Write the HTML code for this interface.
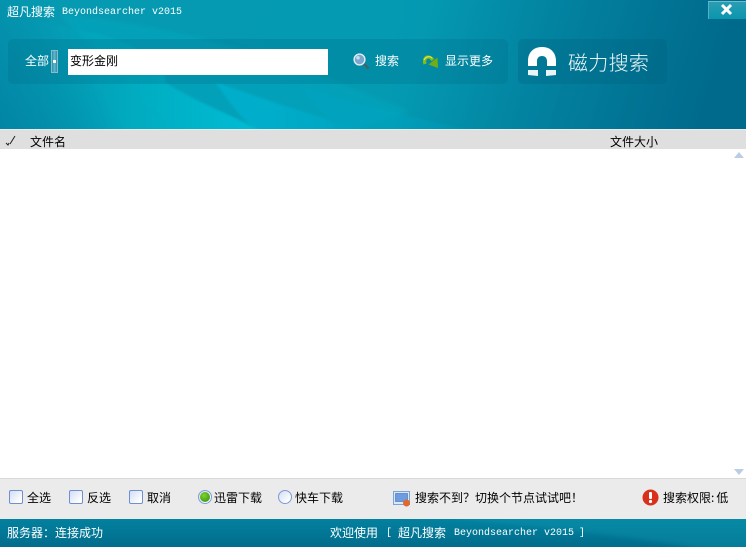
<!DOCTYPE html>
<html><head><meta charset="utf-8"><style>
html,body{margin:0;padding:0;width:746px;height:547px;overflow:hidden;background:#fff}
body{position:relative;font-family:"WenQuanYi Zen Hei","Noto Sans CJK SC",sans-serif;font-size:12px;color:#000}
.t{position:absolute;white-space:nowrap;line-height:14px;height:14px}
.w{color:#fff}
.m{font-family:"Liberation Mono",monospace;font-size:10px}
.abs{position:absolute}
.cb{position:absolute;width:12px;height:12px;border:1px solid #6f90cf;border-radius:2px;background:linear-gradient(135deg,#d3ddf5,#fff 85%)}
.rb{position:absolute;width:12px;height:12px;border:1px solid #7d9bd6;border-radius:50%;background:linear-gradient(135deg,#d3ddf5,#fff 85%)}
</style></head><body>
<svg class="abs" style="left:0;top:0" width="746" height="129" viewBox="0 0 746 129">
<defs>
<linearGradient id="g" x1="0" y1="0" x2="746" y2="129" gradientUnits="userSpaceOnUse"><stop offset="0" stop-color="#069ab2"/><stop offset=".5" stop-color="#049ab2"/><stop offset="1" stop-color="#048fab"/></linearGradient>
<linearGradient id="br" x1="0" y1="0" x2="240" y2="0" gradientUnits="userSpaceOnUse"><stop offset="0" stop-color="#009ab6" stop-opacity="0"/><stop offset=".55" stop-color="#01aec2" stop-opacity=".85"/><stop offset="1" stop-color="#00bad2"/></linearGradient>
<linearGradient id="rr" x1="260" y1="0" x2="480" y2="0" gradientUnits="userSpaceOnUse"><stop offset="0" stop-color="#00aecb"/><stop offset="1" stop-color="#0098b6"/></linearGradient>
<linearGradient id="d" x1="420" y1="40" x2="700" y2="129" gradientUnits="userSpaceOnUse"><stop offset="0" stop-color="#006a8c" stop-opacity="0"/><stop offset="1" stop-color="#006a8c"/></linearGradient>
<linearGradient id="l" x1="90" y1="70" x2="0" y2="129" gradientUnits="userSpaceOnUse"><stop offset="0" stop-color="#0180a2" stop-opacity="0"/><stop offset="1" stop-color="#0180a2" stop-opacity=".8"/></linearGradient>
<filter id="f" x="-10%" y="-10%" width="120%" height="120%"><feGaussianBlur stdDeviation="1"/></filter>
<filter id="f3" x="-10%" y="-10%" width="120%" height="120%"><feGaussianBlur stdDeviation="2"/></filter>
<filter id="f4" x="-10%" y="-30%" width="120%" height="160%"><feGaussianBlur stdDeviation="3"/></filter>
</defs>
<rect width="746" height="129" fill="url(#g)"/>
<path d="M60 15C180 25 290 60 410 112L340 135H180Z" fill="#02b0c6" opacity=".35" filter="url(#f3)"/>
<path d="M215 82C265 100 320 118 380 135H260C235 112 225 95 215 82Z" fill="url(#rr)" filter="url(#f)"/>
<path d="M300 85C350 105 420 118 490 135H340C325 115 310 100 300 85Z" fill="#00a3c0" opacity=".6" filter="url(#f)"/>
<path d="M20 20C120 30 170 60 165 82C190 100 240 118 268 135H-10V40Z" fill="url(#br)" filter="url(#f)"/>
<rect width="746" height="129" fill="url(#d)"/>
<rect width="746" height="129" fill="url(#l)"/>
</svg>
<div class="abs" style="left:8px;top:39px;width:500px;height:45px;background:#01718c;opacity:.3;border-radius:5px"></div>
<div class="abs" style="left:518px;top:39px;width:149px;height:45px;background:#01607f;opacity:.3;border-radius:5px"></div>

<div class="t w" style="left:7px;top:5px">超凡搜索</div>
<div class="t w m" style="left:62px;top:6px">Beyondsearcher v2015</div>

<div class="abs" style="left:708px;top:1px;width:38px;height:17px;background:linear-gradient(#2a9db2,#0a96ae);border-top:1px solid #6fbccb;border-left:1px solid #5ab0c2"></div>
<svg class="abs" style="left:719px;top:3px" width="16" height="14"><path d="M3 2L12 11M12 2L3 11" stroke="#fff" stroke-width="3"/></svg>

<div class="t w" style="left:25px;top:54px">全部</div>
<div class="abs" style="left:51px;top:50px;width:5px;height:21px;border:1px solid #8fb9c6;background:linear-gradient(90deg,#2b8fa8,#5dbad0,#2b8fa8)"><div class="abs" style="left:1px;top:9px;width:3px;height:3px;background:#fff"></div></div>
<div class="abs" style="left:68px;top:49px;width:260px;height:26px;background:#fff"></div>
<div class="t" style="left:70px;top:54px">变形金刚</div>

<svg class="abs" style="left:353px;top:53px" width="17" height="17"><line x1="10" y1="10" x2="15.5" y2="15.5" stroke="#47606c" stroke-width="2.4"/><circle cx="6.5" cy="6.5" r="5.4" fill="#7aa6cf" stroke="#e2edf2" stroke-width="1.4"/><circle cx="5" cy="4.8" r="1.8" fill="#c6dcea"/></svg>
<div class="t w" style="left:375px;top:54px">搜索</div>
<svg class="abs" style="left:422px;top:53px" width="18" height="16"><path d="M3 11C1 5 6 1 11 7" fill="none" stroke="#86bb18" stroke-width="3.4"/><path d="M6.5 11.5L16 15L15.5 4.5Z" fill="#74ad12"/><path d="M2 7C4 3 8 3 10 5" stroke="#e0ef5a" stroke-width="1" fill="none"/></svg>
<div class="t w" style="left:445px;top:54px">显示更多</div>

<svg class="abs" style="left:527px;top:46px" width="30" height="31"><path d="M1 20V15C1 6 7 1 15 1C23 1 29 6 29 15V20H20V15C20 12 18 10 15 10C12 10 10 12 10 15V20Z" fill="#fff"/><path d="M1 24H11V30L1 29ZM19 24H29V29L19 30Z" fill="#fff" opacity=".92"/></svg>
<div class="t w" style="left:568px;top:49px;font-size:20px;line-height:26px;height:26px;font-family:'Noto Sans CJK SC',sans-serif;font-weight:300;opacity:.95;letter-spacing:.3px">磁力搜索</div>

<div class="abs" style="left:0;top:129px;width:746px;height:20px;background:#dfdfdf;border-top:1px solid #e8eced;box-sizing:border-box"></div>
<svg class="abs" style="left:5px;top:135px" width="12" height="12"><path d="M1 8L3 10L4 8M5 9L10 1" stroke="#222" stroke-width="1" fill="none"/></svg>
<div class="t" style="left:30px;top:135px">文件名</div>
<div class="t" style="left:610px;top:135px">文件大小</div>

<svg class="abs" style="left:733px;top:151px" width="12" height="8"><path d="M1 7L6 1L11 7Z" fill="#b9cde4"/></svg>
<svg class="abs" style="left:733px;top:468px" width="12" height="8"><path d="M1 1L6 7L11 1Z" fill="#b9cde4"/></svg>

<div class="abs" style="left:0;top:478px;width:746px;height:41px;background:#ebebeb;border-top:1px solid #d9d9d9;box-sizing:border-box"></div>
<div class="cb" style="left:9px;top:490px"></div><div class="t" style="left:27px;top:491px">全选</div>
<div class="cb" style="left:69px;top:490px"></div><div class="t" style="left:87px;top:491px">反选</div>
<div class="cb" style="left:129px;top:490px"></div><div class="t" style="left:147px;top:491px">取消</div>
<div class="rb" style="left:198px;top:490px"></div>
<div class="abs" style="left:200px;top:492px;width:10px;height:10px;border-radius:50%;background:radial-gradient(circle at 40% 35%,#7fd42c,#2f8a0c)"></div>
<div class="t" style="left:214px;top:491px">迅雷下载</div>
<div class="rb" style="left:278px;top:490px"></div>
<div class="t" style="left:295px;top:491px">快车下载</div>

<svg class="abs" style="left:393px;top:491px" width="18" height="16"><rect x=".5" y=".5" width="16" height="13" fill="#dbe8f8" stroke="#7ba3d8"/><rect x="2.5" y="2.5" width="12" height="8" fill="#6d9de0" stroke="#3f6fb8" stroke-width=".6"/><circle cx="13.5" cy="12" r="3.5" fill="#e2672a"/></svg>
<div class="t" style="left:415px;top:491px">搜索不到？切换个节点试试吧！</div>
<svg class="abs" style="left:642px;top:489px" width="17" height="17"><circle cx="8.5" cy="8.5" r="8" fill="#d8301a"/><rect x="7" y="3" width="3" height="7" rx="1" fill="#fff"/><circle cx="8.5" cy="12.5" r="1.6" fill="#fff"/></svg>
<div class="t" style="left:663px;top:491px">搜索权限<span style="letter-spacing:2px">:</span>低</div>

<svg class="abs" style="left:0;top:519px" width="746" height="28"><defs><linearGradient id="b" x1="0" y1="0" x2="0" y2="1"><stop offset="0" stop-color="#02819f"/><stop offset="1" stop-color="#026c8c"/></linearGradient><filter id="bb" x="-10%" y="-30%" width="120%" height="160%"><feGaussianBlur stdDeviation="3"/></filter></defs><rect width="746" height="28" fill="url(#b)"/><path d="M380 -6H760V34H720C640 16 500 4 380 -6Z" fill="#0a97af" opacity=".4" filter="url(#bb)"/></svg>
<div class="t w" style="left:7px;top:526px">服务器：连接成功</div>
<div class="t w" style="left:330px;top:526px">欢迎使用</div>
<div class="t w m" style="left:386px;top:527px">[</div>
<div class="t w" style="left:398px;top:526px">超凡搜索</div>
<div class="t w m" style="left:454px;top:527px">Beyondsearcher v2015</div>
<div class="t w m" style="left:579px;top:527px">]</div>
</body></html>
